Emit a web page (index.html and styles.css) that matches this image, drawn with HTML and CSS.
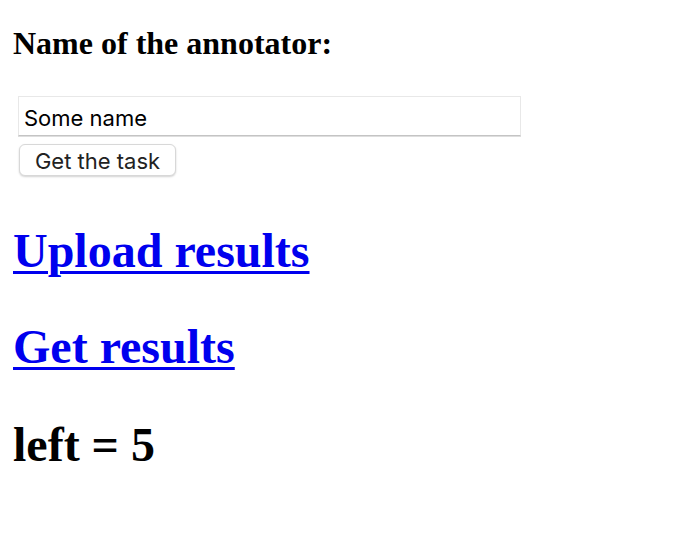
FILE: index.html
```html
<!DOCTYPE html>
<html>
<head>
<meta charset="utf-8">
<link rel="stylesheet" href="styles.css">
</head>
<body>
<h3 class="title">Name of the annotator:</h3>
<form class="form">
<input class="name-input" type="text" value="Some name">
<button class="task-btn" type="button">Get the task</button>
</form>
<h1 class="heading heading-first"><a class="link" href="#">Upload results</a></h1>
<h1 class="heading"><a class="link" href="#">Get results</a></h1>
<h1 class="heading">left = 5</h1>
</body>
</html>
```

FILE: styles.css
```css
html, body {
  margin: 0;
  padding: 0;
  background: #fff;
}
body {
  padding: 0 13px;
  font-family: "Liberation Serif", "Times New Roman", serif;
  color: #000;
}
.title {
  font-size: 32px;
  line-height: 37px;
  font-weight: bold;
  margin: 25px 0 34px;
}
.form {
  display: flex;
  flex-direction: column;
  align-items: flex-start;
  margin: 0;
}
.name-input {
  box-sizing: border-box;
  width: 503px;
  height: 40px;
  margin: 0 0 0 5px;
  padding: 4px 5px 0;
  border: 1px solid #e8e8e8;
  border-bottom-color: #c4c4c4;
  box-shadow: 0 1px 0 #dedede;
  font-family: Inter, "DejaVu Sans", sans-serif;
  font-size: 22px;
  color: #000;
  background: #fff;
  outline: none;
}
.task-btn {
  box-sizing: border-box;
  width: 157px;
  height: 32px;
  margin: 8px 0 0 6px;
  padding: 2px 0 0;
  border: 1px solid #d8d8d8;
  border-radius: 6px;
  background: #fff;
  box-shadow: 0 1px 2px rgba(0,0,0,0.18);
  font-family: Inter, "DejaVu Sans", sans-serif;
  font-size: 22px;
  color: #222;
}
.heading {
  font-size: 48px;
  line-height: 55px;
  font-weight: bold;
  margin: 41px 0 0;
}
.heading-first {
  margin-top: 47px;
}
.heading:last-child {
  margin-top: 43px;
}
.link {
  color: #0000ee;
  text-decoration: underline;
  text-decoration-thickness: 3px;
  text-underline-offset: 4px;
}
```
